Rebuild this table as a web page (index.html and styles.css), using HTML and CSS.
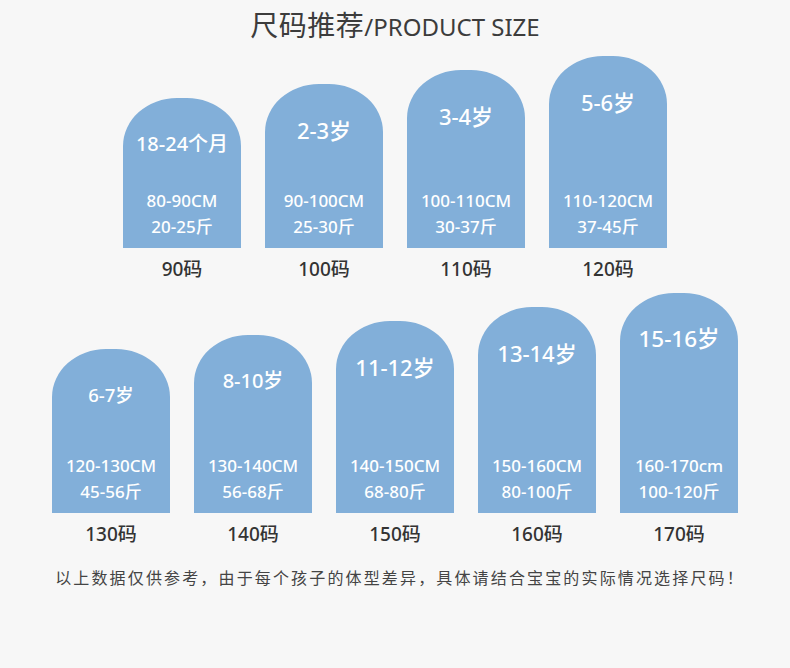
FILE: index.html
```html
<!DOCTYPE html>
<html lang="zh">
<head>
<meta charset="utf-8">
<title>尺码推荐</title>
<link rel="stylesheet" href="styles.css">
</head>
<body>
<div class="page">
  <h1 class="title"><span class="title-cn">尺码推荐</span><span class="title-en">/PRODUCT SIZE</span></h1>

  <div class="row row-1">
    <div class="item">
      <div class="card h150"><div class="age a20">18-24个月</div><div class="info"><div>80-90CM</div><div>20-25斤</div></div></div>
      <div class="size">90码</div>
    </div>
    <div class="item">
      <div class="card h164"><div class="age a22">2-3岁</div><div class="info"><div>90-100CM</div><div>25-30斤</div></div></div>
      <div class="size">100码</div>
    </div>
    <div class="item">
      <div class="card h178"><div class="age a22">3-4岁</div><div class="info"><div>100-110CM</div><div>30-37斤</div></div></div>
      <div class="size">110码</div>
    </div>
    <div class="item">
      <div class="card h192"><div class="age a22">5-6岁</div><div class="info"><div>110-120CM</div><div>37-45斤</div></div></div>
      <div class="size">120码</div>
    </div>
  </div>

  <div class="row row-2">
    <div class="item">
      <div class="card h164"><div class="age a18">6-7岁</div><div class="info"><div>120-130CM</div><div>45-56斤</div></div></div>
      <div class="size">130码</div>
    </div>
    <div class="item">
      <div class="card h178"><div class="age a20">8-10岁</div><div class="info"><div>130-140CM</div><div>56-68斤</div></div></div>
      <div class="size">140码</div>
    </div>
    <div class="item">
      <div class="card h192"><div class="age a22">11-12岁</div><div class="info"><div>140-150CM</div><div>68-80斤</div></div></div>
      <div class="size">150码</div>
    </div>
    <div class="item">
      <div class="card h206"><div class="age a22">13-14岁</div><div class="info"><div>150-160CM</div><div>80-100斤</div></div></div>
      <div class="size">160码</div>
    </div>
    <div class="item">
      <div class="card h220"><div class="age a23">15-16岁</div><div class="info"><div>160-170cm</div><div>100-120斤</div></div></div>
      <div class="size">170码</div>
    </div>
  </div>

  <p class="note">以上数据仅供参考，由于每个孩子的体型差异，具体请结合宝宝的实际情况选择尺码！</p>
</div>
</body>
</html>
```

FILE: styles.css
```css
* { box-sizing: border-box; }
html, body {
  margin: 0;
  padding: 0;
  background: #f7f7f7;
}
body {
  width: 790px;
  height: 668px;
  overflow: hidden;
  font-family: "Noto Sans", "Noto Sans CJK SC", sans-serif;
  color: #333;
}
.page {
  display: flex;
  flex-direction: column;
  align-items: center;
}
.title {
  margin: 7px 0 0;
  height: 34px;
  display: flex;
  align-items: baseline;
  font-weight: 400;
  color: #3c3c3c;
  line-height: 34px;
}
.title-cn {
  font-family: "Noto Sans CJK SC", sans-serif;
  font-size: 28px;
  letter-spacing: 0.5px;
}
.title-en {
  font-family: "Noto Sans", sans-serif;
  font-size: 24px;
}
.row {
  display: flex;
  align-items: flex-end;
  gap: 24px;
}
.row-1 { margin-top: 7px; height: 234px; }
.row-2 { margin-top: 12px; height: 253px; }
.item {
  width: 118px;
  display: flex;
  flex-direction: column;
  align-items: center;
}
.card {
  width: 118px;
  background: #82afd9;
  border-radius: 54px 54px 0 0 / 48px 48px 0 0;
  color: #fff;
  display: flex;
  flex-direction: column;
  align-items: center;
  justify-content: space-between;
  padding: 30px 0 8px;
  font-family: "Noto Sans", "Noto Sans CJK SC", sans-serif;
  font-weight: 500;
}
.h150 { height: 150px; }
.h164 { height: 164px; }
.h178 { height: 178px; }
.h192 { height: 192px; }
.h206 { height: 206px; }
.h220 { height: 220px; }
.age {
  line-height: 32px;
  white-space: nowrap;
}
.a18 { font-size: 18.5px; }
.a20 { font-size: 20px; }
.a22 { font-size: 22px; }
.a23 { font-size: 22.5px; }
.info {
  font-size: 17px;
  line-height: 26px;
  text-align: center;
  white-space: nowrap;
}
.size {
  margin-top: 8px;
  font-size: 19px;
  line-height: 26px;
  font-weight: 500;
  color: #333;
}
.note {
  margin: 18px 0 0;
  padding-left: 10px;
  font-family: "Noto Sans CJK SC", sans-serif;
  font-size: 16px;
  letter-spacing: 2.15px;
  color: #444;
  line-height: 24px;
}
```
